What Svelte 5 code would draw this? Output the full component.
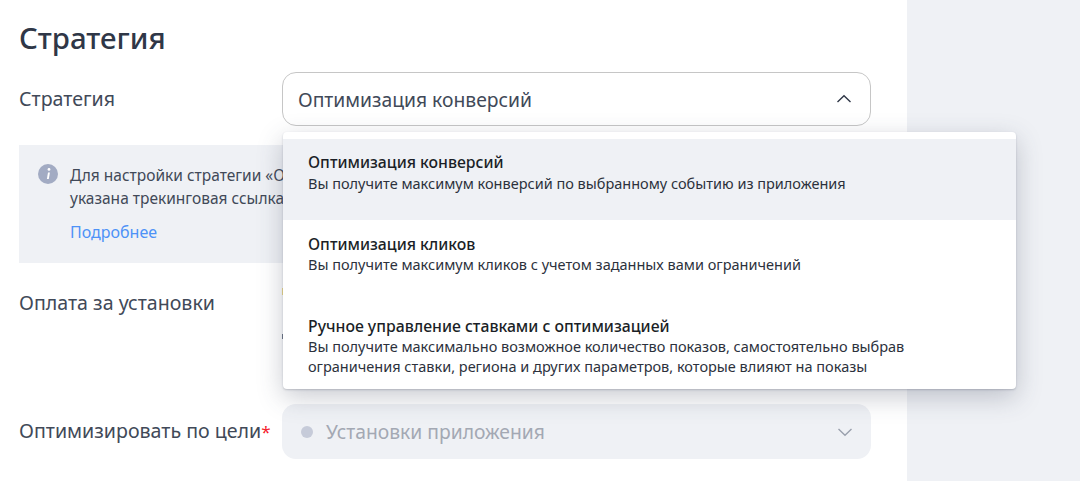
<script>
  const options = [
    { title: 'Оптимизация конверсий', text: ['Вы получите максимум конверсий по выбранному событию из приложения'], active: true },
    { title: 'Оптимизация кликов', text: ['Вы получите максимум кликов с учетом заданных вами ограничений'] },
    { title: 'Ручное управление ставками с оптимизацией', text: ['Вы получите максимально возможное количество показов, самостоятельно выбрав', 'ограничения ставки, региона и других параметров, которые влияют на показы'] }
  ];
</script>

<div class="page">
  <main class="main">
    <h1>Стратегия</h1>
    <div class="row first">
      <div class="label">Стратегия</div>
      <div class="select open">
        <span>Оптимизация конверсий</span>
        <svg width="16" height="10" viewBox="0 0 16 10"><path d="M1.5 8 8 1.8 14.5 8" fill="none" stroke="#2f3747" stroke-width="1.4"/></svg>
      </div>
    </div>
    <div class="notice">
      <svg class="info" width="20" height="20" viewBox="0 0 20 20"><circle cx="10" cy="10" r="10" fill="#a2abc3"/><circle cx="11" cy="5.4" r="1.4" fill="#fff"/><path d="M10 8.6 8.9 15h1.9l1.1-6.4z" fill="#fff"/></svg>
      <div class="notice-body">
        <p>Для настройки стратегии «О</p>
        <p>указана трекинговая ссылка</p>
        <span class="link">Подробнее</span>
      </div>
    </div>
    <div class="row pay">
      <div class="label">Оплата за установки</div>
      <div class="pay-value"><i class="mark yellow"></i><i class="mark gray"></i></div>
    </div>
    <div class="row goal">
      <div class="label">Оптимизировать по цели<span class="req">*</span></div>
      <div class="select disabled">
        <i class="dot"></i>
        <span class="value">Установки приложения</span>
        <svg width="16" height="10" viewBox="0 0 16 10"><path d="M1.5 2 8 8.2 14.5 2" fill="none" stroke="#9aa0ad" stroke-width="1.4"/></svg>
      </div>
    </div>
    <div class="menu">
      {#each options as o}
        <div class="option" class:active={o.active}>
          <div class="opt-title">{o.title}</div>
          {#each o.text as line}<div class="opt-text">{line}</div>{/each}
        </div>
      {/each}
    </div>
  </main>
  <aside class="side"></aside>
</div>

<style>
  :global(body) { margin: 0; background: #fff; }
  .page {
    display: grid;
    grid-template-columns: 907px 173px;
    width: 1080px;
    height: 481px;
    overflow: hidden;
    font-family: "Noto Sans", "Liberation Sans", sans-serif;
    color: #394152;
  }
  .main { position: relative; padding: 19px 36px 0 19px; box-sizing: border-box; }
  .side { background: #eff1f5; }
  h1 { margin: 0; font-size: 29.4px; line-height: 38px; font-weight: 500; color: #2f3747; }
  .row { display: grid; grid-template-columns: 263px 589px; }
  .first { margin-top: 15px; align-items: center; }
  .label { font-size: 19.6px; line-height: 24px; color: #414958; }
  .select {
    height: 54px;
    box-sizing: border-box;
    border-radius: 14px;
    display: flex;
    align-items: center;
    padding: 0 18px 0 15px;
    font-size: 19.3px;
  }
  .select svg { margin-left: auto; }
  .open { border: 1.5px solid #c6c6c6; color: #414958; }
  .notice {
    margin-top: 19px;
    width: 852px;
    height: 118px;
    box-sizing: border-box;
    background: #eff1f5;
    padding: 19px 19px 0;
    display: flex;
    gap: 12px;
  }
  .info { flex: none; }
  .notice-body { font-size: 15.5px; line-height: 23px; color: #414958; }
  .notice-body p { margin: 0; white-space: nowrap; }
  .link { display: block; margin-top: 11px; color: #4d92f7; font-size: 16px; }
  .pay { margin-top: 28px; height: 113px; }
  .pay-value { position: relative; }
  .mark { position: absolute; left: 0; width: 2px; }
  .yellow { top: -3px; height: 7px; background: #f2dc8a; }
  .gray { top: 43px; height: 5px; background: #6e7686; }
  .goal { align-items: center; }
  .goal .select { height: 55px; padding-left: 16px; }
  .disabled { background: #eff1f5; color: #a3a8b3; }
  .dot { width: 12px; height: 12px; border-radius: 50%; background: #c6cbd9; margin: 0 13px 0 3px; flex: none; }
  .req { color: #f5222d; font-size: 17px; }
  .menu {
    position: absolute;
    left: 283px;
    top: 132px;
    width: 733px;
    height: 257px;
    box-sizing: border-box;
    padding-top: 7px;
    background: #fff;
    border-radius: 4px;
    box-shadow: 0 8px 26px rgba(60, 68, 90, 0.28), 0 1px 2px rgba(60, 68, 90, 0.25);
    color: #1f2430;
  }
  .option { padding: 13px 25px 0; height: 81px; box-sizing: border-box; }
  .option + .option { height: 82px; padding-top: 14px; }
  .active { background: #eff1f5; }
  .opt-title { font-size: 15.8px; line-height: 20px; font-weight: 500; color: #1b1f27; }
  .opt-text { font-size: 14.5px; line-height: 20px; color: #2c313c; }
  .active .opt-text { margin-top: 1px; }
  .opt-text + .opt-text { margin-top: 0; }
</style>
